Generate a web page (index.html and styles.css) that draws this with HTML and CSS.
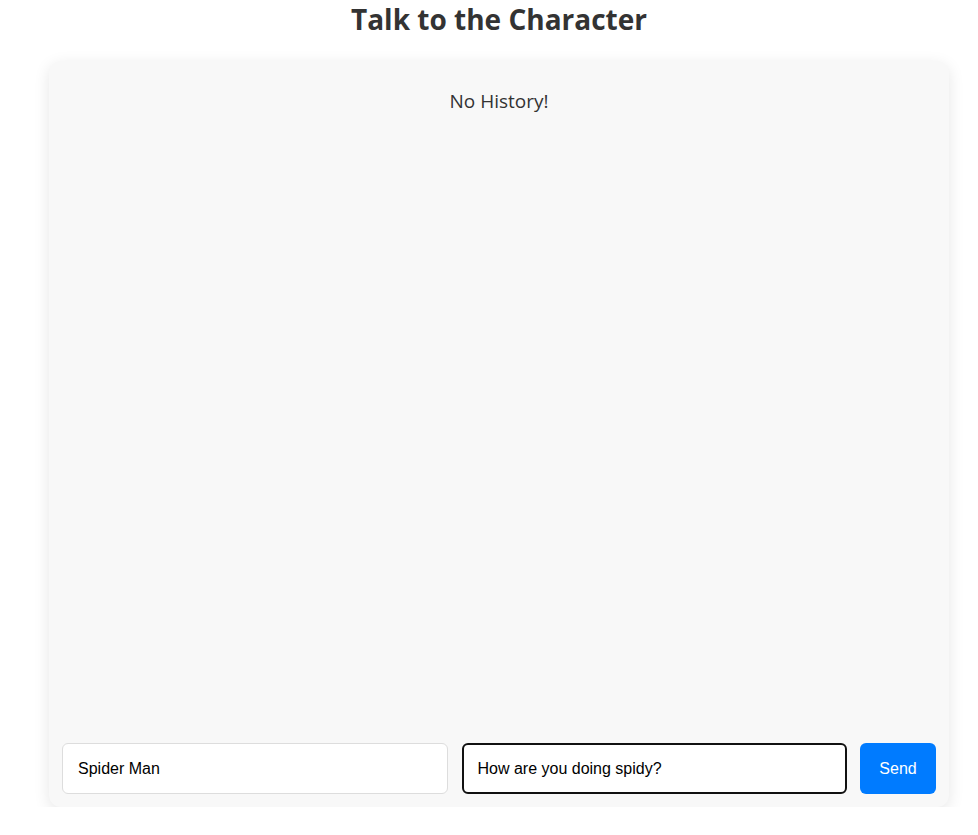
FILE: index.html
```html
<!DOCTYPE html>
<html>
<head>
<meta charset="utf-8">
<link rel="stylesheet" href="styles.css">
</head>
<body>
<div class="page">
  <h1 class="title">Talk to the Character</h1>
  <div class="chat">
    <div class="history">
      <p class="empty">No History!</p>
    </div>
    <div class="controls">
      <input class="field" type="text" value="Spider Man">
      <input class="field field-focus" type="text" value="How are you doing spidy?">
      <button class="send">Send</button>
    </div>
  </div>
</div>
</body>
</html>
```
FILE: styles.css
```css
html, body {
  margin: 0;
  padding: 0;
  background: #ffffff;
}
.page {
  width: 900px;
  margin-left: 49px;
  font-family: "Open Sans", "Noto Sans", sans-serif;
}
.title {
  margin: 0;
  padding-top: 0;
  text-align: center;
  font-size: 28px;
  line-height: 38px;
  font-weight: 700;
  color: #333333;
}
.chat {
  margin-top: 23px;
  height: 746px;
  box-sizing: border-box;
  background: #f8f8f8;
  border-radius: 12px;
  box-shadow: 0 4px 16px rgba(0, 0, 0, 0.1);
  display: flex;
  flex-direction: column;
  padding: 13px;
}
.history {
  flex: 1;
}
.empty {
  margin: 0;
  padding-top: 14px;
  text-align: center;
  font-size: 19px;
  color: #333333;
}
.controls {
  display: flex;
  gap: 14px;
  align-items: stretch;
}
.field {
  flex: 1;
  min-width: 0;
  height: 51px;
  box-sizing: border-box;
  border: 1px solid #dddddd;
  border-radius: 6px;
  background: #ffffff;
  padding: 0 15px;
  font-family: "Liberation Sans", Arial, sans-serif;
  font-size: 16px;
  color: #000000;
  outline: none;
}
.field-focus {
  border: 2px solid #111111;
  padding: 0 14px;
}
.send {
  width: 76px;
  height: 51px;
  margin-left: -1px;
  border: none;
  border-radius: 6px;
  background: #007bff;
  color: #ffffff;
  font-family: "Liberation Sans", Arial, sans-serif;
  font-size: 16px;
  cursor: pointer;
}
```
